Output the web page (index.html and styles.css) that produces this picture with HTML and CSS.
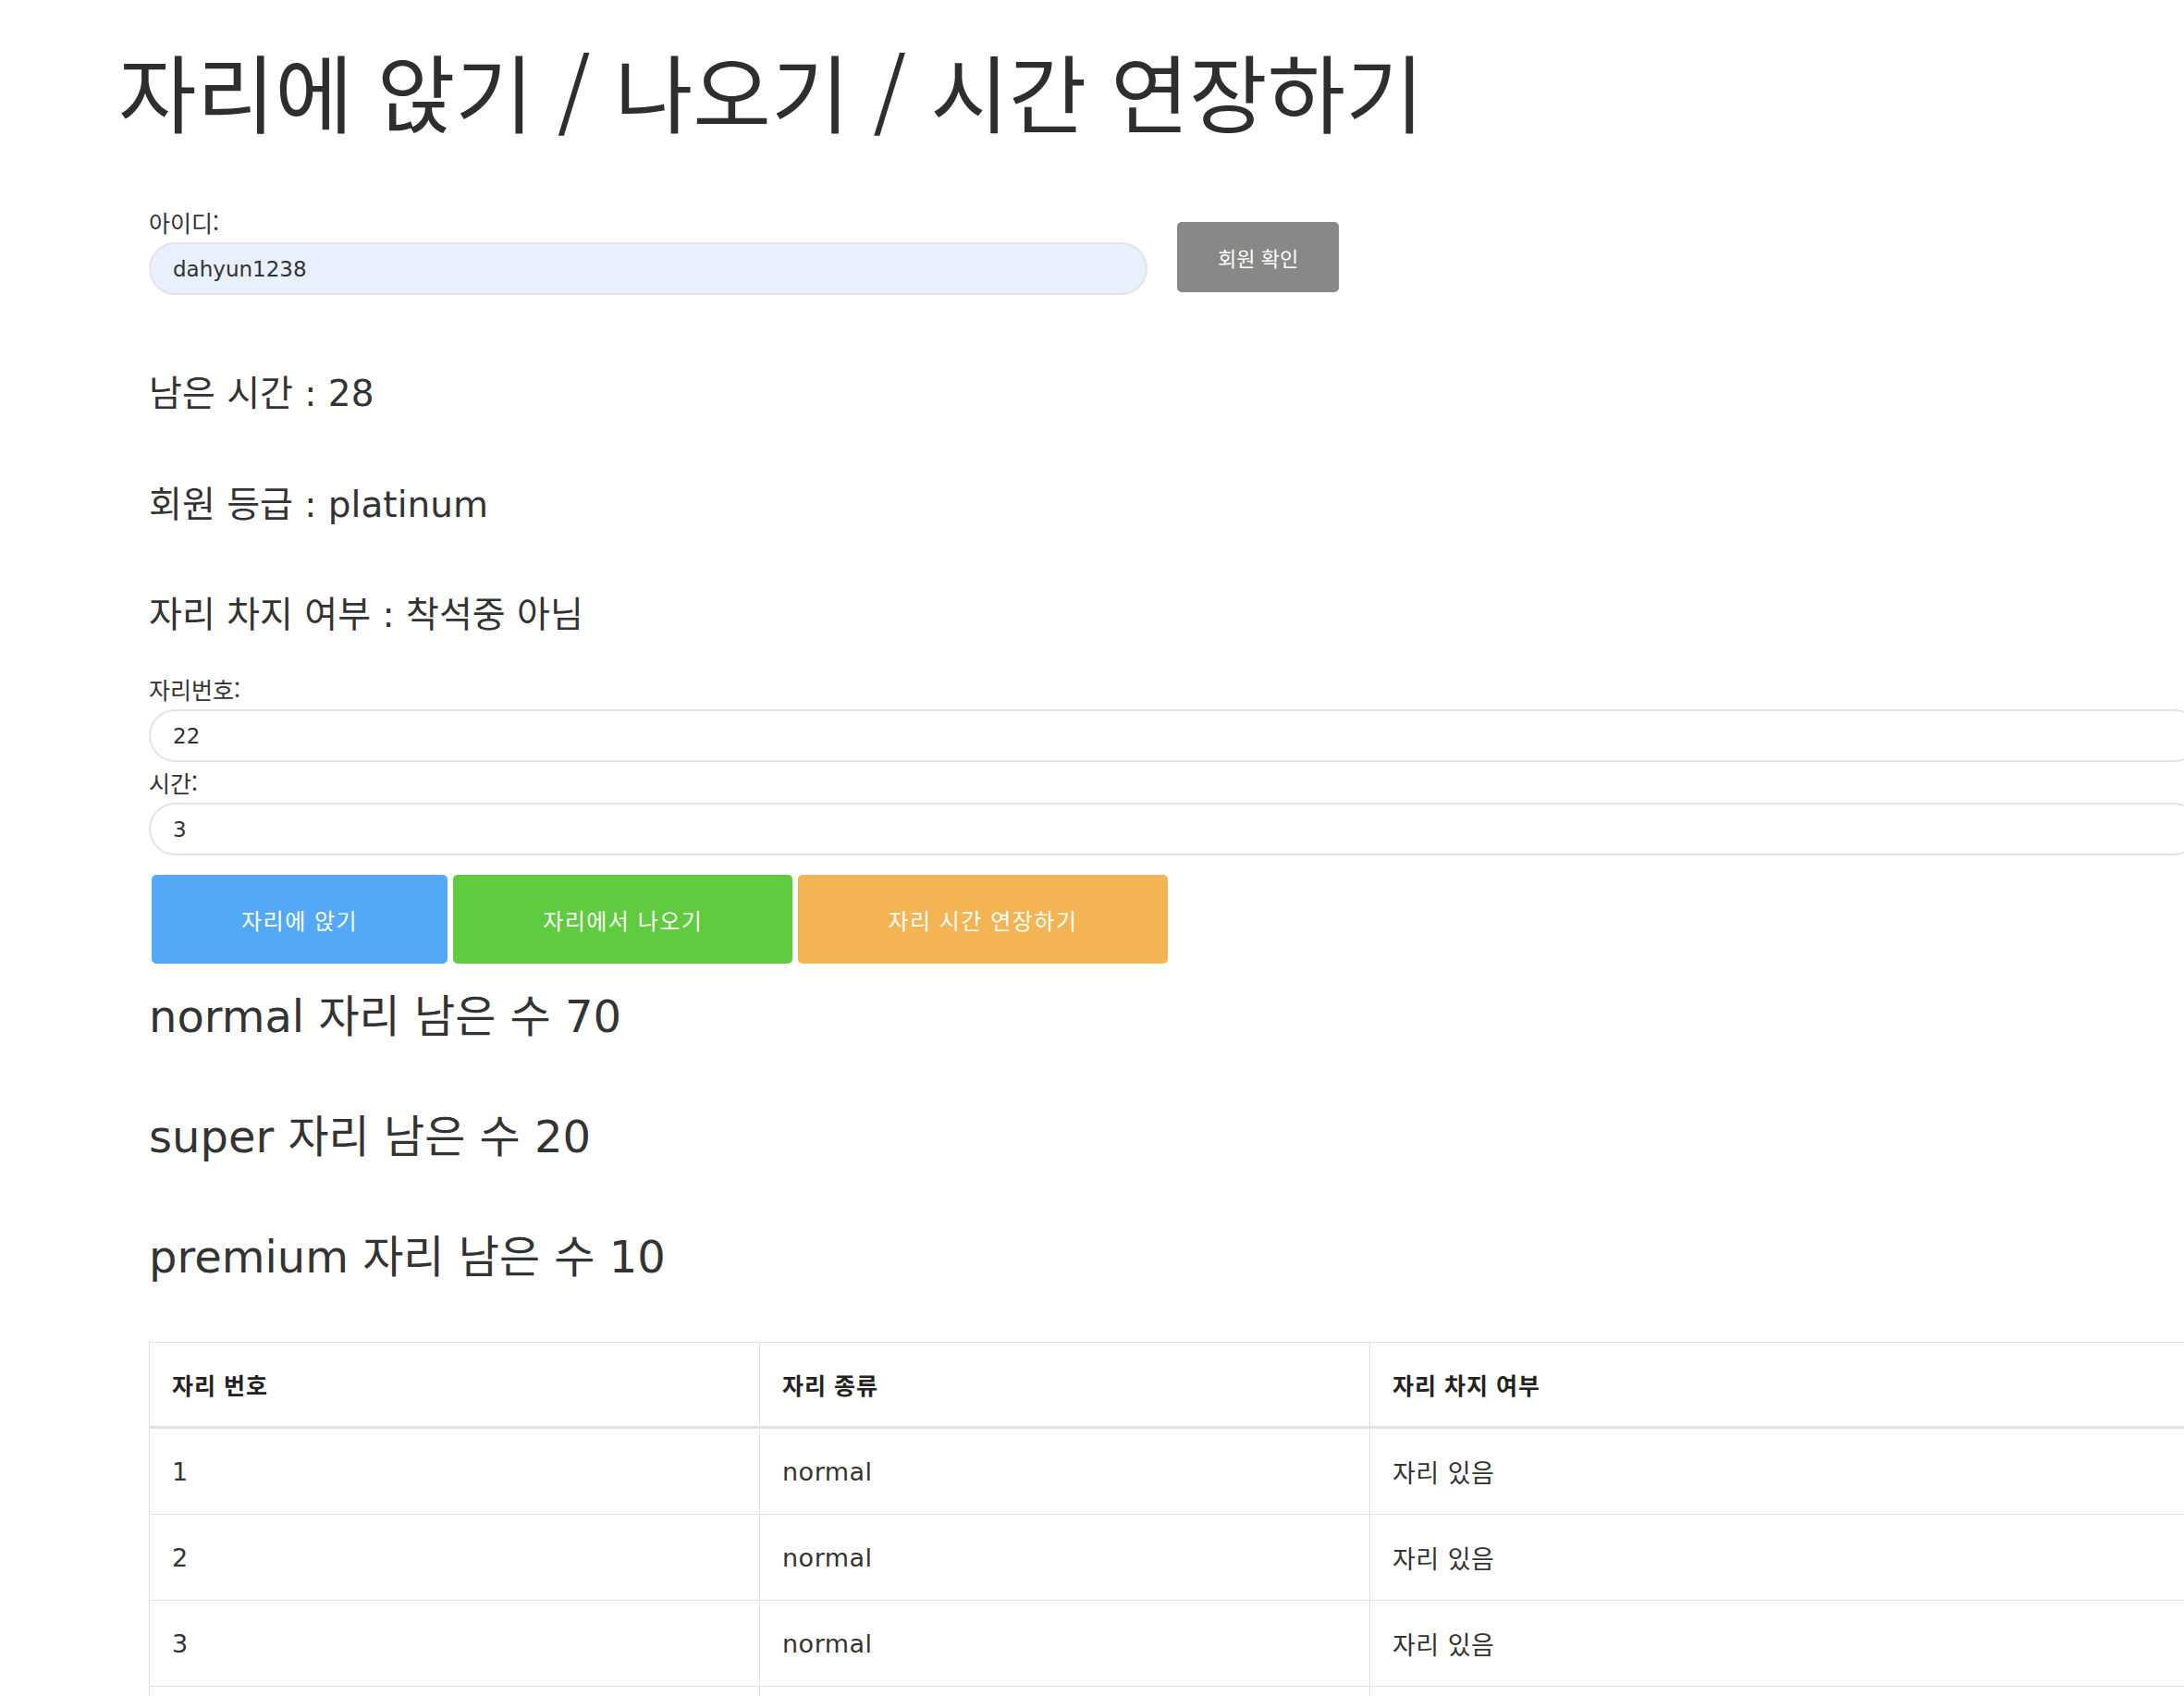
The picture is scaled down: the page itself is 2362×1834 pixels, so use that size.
FILE: index.html
```html
<!DOCTYPE html>
<html lang="ko">
<head>
<meta charset="utf-8">
<title>자리에 앉기 / 나오기 / 시간 연장하기</title>
<link rel="stylesheet" href="styles.css">
</head>
<body>
<h1 class="title">자리에 앉기 / 나오기 / 시간 연장하기</h1>
<main class="content">
  <form class="member-form">
    <div class="field field-id">
      <label class="label" for="uid">아이디:</label>
      <input id="uid" class="text-input text-input-filled" type="text" value="dahyun1238">
    </div>
    <button type="button" class="btn btn-gray">회원 확인</button>
  </form>

  <div class="info">
    <p class="info-line">남은 시간 : 28</p>
    <p class="info-line">회원 등급 : platinum</p>
    <p class="info-line">자리 차지 여부 : 착석중 아님</p>
  </div>

  <form class="seat-form">
    <label class="label" for="seat">자리번호:</label>
    <input id="seat" class="text-input" type="text" value="22">
    <label class="label" for="hours">시간:</label>
    <input id="hours" class="text-input" type="text" value="3">
    <div class="actions">
      <button type="button" class="btn btn-action btn-blue">자리에 앉기</button>
      <button type="button" class="btn btn-action btn-green">자리에서 나오기</button>
      <button type="button" class="btn btn-action btn-orange">자리 시간 연장하기</button>
    </div>
  </form>

  <div class="stats">
    <p class="stat">normal 자리 남은 수 70</p>
    <p class="stat">super 자리 남은 수 20</p>
    <p class="stat">premium 자리 남은 수 10</p>
  </div>

  <table class="seat-table">
    <thead>
      <tr><th class="col-num">자리 번호</th><th class="col-type">자리 종류</th><th>자리 차지 여부</th></tr>
    </thead>
    <tbody>
      <tr><td>1</td><td>normal</td><td>자리 있음</td></tr>
      <tr><td>2</td><td>normal</td><td>자리 있음</td></tr>
      <tr><td>3</td><td>normal</td><td>자리 있음</td></tr>
      <tr><td>4</td><td>normal</td><td>자리 있음</td></tr>
      <tr><td>5</td><td>normal</td><td>자리 있음</td></tr>
    </tbody>
  </table>
</main>
</body>
</html>
```
FILE: styles.css
```css
html {
  overflow: hidden;
}

body {
  margin: 0;
  background: #ffffff;
  color: #333333;
  font-family: "Noto Sans CJK KR", "Noto Sans", sans-serif;
}

.title {
  margin: 40px 0 0 128px;
  font-size: 92px;
  font-weight: 400;
  line-height: 113px;
  letter-spacing: 0;
  color: #2e2e2e;
  white-space: nowrap;
}

.content {
  margin-left: 161px;
  width: 2219px;
}

.member-form {
  display: flex;
  align-items: flex-end;
  margin-top: 65px;
}

.field-id {
  width: 1080px;
}

.label {
  display: block;
  font-size: 25px;
  line-height: 44px;
  color: #333333;
}

.text-input {
  display: block;
  box-sizing: border-box;
  width: 100%;
  height: 57px;
  margin: 0;
  padding: 0 24px;
  border: 2px solid #e4e4e4;
  border-radius: 30px;
  background: #ffffff;
  font-family: "DejaVu Sans", "Noto Sans CJK KR", sans-serif;
  font-size: 23px;
  color: #333333;
  outline: none;
}

.text-input-filled {
  background: #e8f0fe;
}

.btn {
  border: 0;
  margin: 0;
  font-family: "Noto Sans CJK KR", sans-serif;
  color: #ffffff;
  cursor: pointer;
}

.btn-gray {
  height: 76px;
  margin: 0 0 3px 32px;
  padding: 0 44px;
  border-radius: 5px;
  background: #888888;
  font-size: 22px;
}

.info {
  margin-top: 47px;
}

.info-line {
  margin: 0;
  font-family: "DejaVu Sans", "Noto Sans CJK KR", sans-serif;
  font-size: 39px;
  line-height: 120px;
  color: #333333;
  white-space: nowrap;
}

.info-line:last-child {
  line-height: 117px;
}

.seat-form {
  margin: 0;
}

.actions {
  display: flex;
  gap: 6px;
  margin: 21px 0 0 3px;
}

.btn-action {
  height: 96px;
  padding: 0 97px;
  border-radius: 5px;
  font-size: 24px;
  letter-spacing: 1.5px;
}

.btn-blue {
  background: #53a9f8;
}

.btn-green {
  background: #5fcb3f;
}

.btn-orange {
  background: #f5b453;
}

.stats {
  margin-top: 33px;
}

.stat {
  margin: 0 0 82px;
  font-family: "DejaVu Sans", "Noto Sans CJK KR", sans-serif;
  font-size: 48px;
  line-height: 1;
  color: #333333;
  white-space: nowrap;
}

.stat:last-child {
  margin-bottom: 0;
}

.seat-table {
  margin-top: 68px;
  width: 2219px;
  border-collapse: collapse;
  font-family: "DejaVu Sans", "Noto Sans CJK KR", sans-serif;
  font-size: 27px;
  letter-spacing: 0.5px;
  color: #333333;
}

.seat-table th,
.seat-table td {
  border: 1px solid #dee2e6;
  padding: 0 24px;
  text-align: left;
  vertical-align: middle;
}

.seat-table th {
  height: 90px;
  border-bottom: 3px solid #dee2e6;
  font-family: "Noto Sans CJK KR", sans-serif;
  font-weight: 700;
  font-size: 25px;
  letter-spacing: 1px;
  color: #222222;
}

.seat-table td {
  height: 92px;
}

.seat-table .col-num,
.seat-table .col-type {
  width: 611px;
}
```
